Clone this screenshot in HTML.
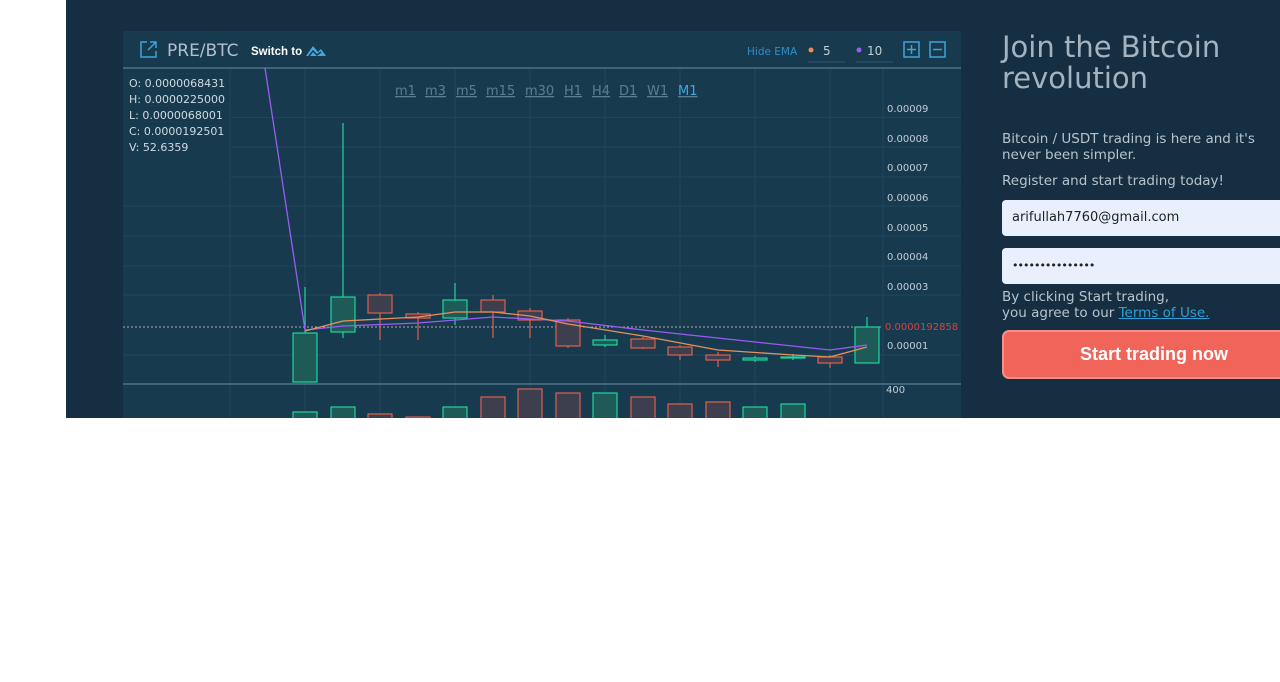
<!DOCTYPE html>
<html><head><meta charset="utf-8"><style>
body{margin:0;width:1280px;height:682px;background:#fff;overflow:hidden;font-family:"DejaVu Sans","Liberation Sans",sans-serif;}
#bg{position:absolute;left:66px;top:0;width:1214px;height:418px;background:#152e42;overflow:hidden}
#panel{position:absolute;left:57px;top:31px;width:838px;height:387px;background:#173a4f}
.r{position:absolute;color:#b7c4cd}
</style></head><body>
<div id="bg">
<div id="panel"></div>
<svg style="position:absolute;left:0;top:0" width="900" height="418">
<g transform="translate(-66,0)">
<line x1="123" y1="68" x2="961" y2="68" stroke="#4f7287" stroke-width="1.5"/>
<g stroke="#21465c" stroke-width="1">
<line x1="230" y1="69" x2="230" y2="418"/><line x1="305" y1="69" x2="305" y2="418"/><line x1="380" y1="69" x2="380" y2="418"/><line x1="455" y1="69" x2="455" y2="418"/><line x1="530" y1="69" x2="530" y2="418"/><line x1="605" y1="69" x2="605" y2="418"/><line x1="680" y1="69" x2="680" y2="418"/><line x1="755" y1="69" x2="755" y2="418"/><line x1="830" y1="69" x2="830" y2="418"/><line x1="883" y1="69" x2="883" y2="418"/>
<line x1="230" y1="117.5" x2="961" y2="117.5"/><line x1="230" y1="147" x2="961" y2="147"/><line x1="230" y1="177" x2="961" y2="177"/><line x1="123" y1="206" x2="961" y2="206"/><line x1="123" y1="236" x2="961" y2="236"/><line x1="123" y1="266" x2="961" y2="266"/><line x1="123" y1="295" x2="961" y2="295"/><line x1="123" y1="355" x2="961" y2="355"/>
</g>
<line x1="123" y1="384" x2="961" y2="384" stroke="#4f7287" stroke-width="1.5"/>
<line x1="123" y1="327" x2="883" y2="327" stroke="#b0a8a8" stroke-dasharray="2,2"/>
<g stroke-width="1.2">
<g stroke="#1ed59b" fill="#1d5a58">
<line x1="305" y1="287" x2="305" y2="382"/><rect x="293" y="333" width="24" height="49"/>
<line x1="343" y1="123" x2="343" y2="338"/><rect x="331" y="297" width="24" height="35"/>
<line x1="455" y1="283" x2="455" y2="325"/><rect x="443" y="300" width="24" height="18"/>
<line x1="605" y1="335" x2="605" y2="347"/><rect x="593" y="340" width="24" height="5"/>
<line x1="755" y1="356" x2="755" y2="362"/><rect x="743" y="358" width="24" height="2"/>
<line x1="793" y1="354" x2="793" y2="360"/><rect x="781" y="357" width="24" height="1"/>
<line x1="867" y1="317" x2="867" y2="363"/><rect x="855" y="327" width="24" height="36"/>
<rect x="293" y="412" width="24" height="10"/><rect x="331" y="407" width="24" height="15"/><rect x="443" y="407" width="24" height="15"/><rect x="593" y="393" width="24" height="30"/><rect x="743" y="407" width="24" height="15"/><rect x="781" y="404" width="24" height="18"/>
</g>
<g stroke="#e0604e" fill="#3d3f4f">
<line x1="380" y1="293" x2="380" y2="340"/><rect x="368" y="295" width="24" height="18"/>
<line x1="418" y1="312" x2="418" y2="340"/><rect x="406" y="314" width="24" height="4"/>
<line x1="493" y1="295" x2="493" y2="338"/><rect x="481" y="300" width="24" height="12"/>
<line x1="530" y1="308" x2="530" y2="338"/><rect x="518" y="311" width="24" height="9"/>
<line x1="568" y1="318" x2="568" y2="348"/><rect x="556" y="320" width="24" height="26"/>
<line x1="643" y1="337" x2="643" y2="349"/><rect x="631" y="339" width="24" height="9"/>
<line x1="680" y1="345" x2="680" y2="360"/><rect x="668" y="347" width="24" height="8"/>
<line x1="718" y1="352" x2="718" y2="367"/><rect x="706" y="355" width="24" height="5"/>
<line x1="830" y1="355" x2="830" y2="368"/><rect x="818" y="357" width="24" height="6"/>
<rect x="368" y="414" width="24" height="8"/><rect x="406" y="417" width="24" height="5"/><rect x="481" y="397" width="24" height="25"/><rect x="518" y="389" width="24" height="33"/><rect x="556" y="393" width="24" height="29"/><rect x="631" y="397" width="24" height="25"/><rect x="668" y="404" width="24" height="18"/><rect x="706" y="402" width="24" height="20"/>
</g>
</g>
<polyline fill="none" stroke="#9b5cf0" stroke-width="1.3" points="265,68 305,330 343,326 418,323 493,317 568,321 643,330 755,342 830,350 867,345"/>
<polyline fill="none" stroke="#e8905a" stroke-width="1.3" points="305,331 343,321 418,317 455,312 493,312 530,316 568,324 643,336 718,350 793,355 830,357 867,347"/>
<g font-family="DejaVu Sans,sans-serif" font-size="10" fill="#c3ced6">
<text x="887" y="112">0.00009</text><text x="887" y="142">0.00008</text><text x="887" y="171">0.00007</text><text x="887" y="201">0.00006</text><text x="887" y="231">0.00005</text><text x="887" y="260">0.00004</text><text x="887" y="290">0.00003</text><text x="887" y="349">0.00001</text><text x="886" y="393">400</text>
<text x="885" y="330" fill="#d2453f">0.0000192858</text>
</g>
<g font-family="DejaVu Sans,sans-serif" font-size="11" fill="#d0dae0">
<text x="129" y="87">O: 0.0000068431</text><text x="129" y="103">H: 0.0000225000</text><text x="129" y="119">L:  0.0000068001</text><text x="129" y="135">C: 0.0000192501</text><text x="129" y="151">V:  52.6359</text>
</g>
<g font-family="DejaVu Sans,sans-serif" font-size="13" fill="#5d7d92" text-decoration="underline">
<text x="395" y="95">m1</text><text x="425" y="95">m3</text><text x="456" y="95">m5</text><text x="486" y="95">m15</text><text x="525" y="95">m30</text><text x="564" y="95">H1</text><text x="592" y="95">H4</text><text x="619" y="95">D1</text><text x="647" y="95">W1</text><text x="678" y="95" fill="#3fa9e0">M1</text>
</g>
<g stroke="#3fa3d8" stroke-width="1.5" fill="none">
<path d="M147 42 H141 V57 H156 V51 M150 42 H156 V48 M156 42 L148 50"/>
<rect x="904" y="42" width="15" height="15"/><path d="M911.5 45 V54 M907 49.5 H916"/>
<rect x="930" y="42" width="15" height="15"/><path d="M933 49.5 H942"/>
</g>
<path d="M306 56 L313 46 L318 52 L321 49 L326 56 Z" fill="#3fa9e0"/>
<path d="M309 56 L313 51 L317 55 L321 52" stroke="#173a4f" stroke-width="1.5" fill="none"/>
<text x="167" y="56" font-family="DejaVu Sans,sans-serif" font-size="17" fill="#b0c1cc">PRE/BTC</text>
<text x="251" y="55" font-family="Liberation Sans,sans-serif" font-size="11.5" font-weight="bold" fill="#fff">Switch to</text>
<text x="747" y="55" font-family="DejaVu Sans,sans-serif" font-size="10.5" fill="#2e8fc4">Hide EMA</text>
<circle cx="811" cy="50" r="2.5" fill="#ee8a57"/><text x="823" y="55" font-family="DejaVu Sans,sans-serif" font-size="12" fill="#c3ced6">5</text>
<line x1="808" y1="62" x2="845" y2="62" stroke="#2c5267"/>
<circle cx="859" cy="50" r="2.5" fill="#9b5cf0"/><text x="867" y="55" font-family="DejaVu Sans,sans-serif" font-size="12" fill="#c3ced6">10</text>
<line x1="856" y1="62" x2="893" y2="62" stroke="#2c5267"/>
</g>
</svg>
<div class="r" style="left:936px;top:32px;font-size:29px;line-height:31px;color:#a3b3bf">Join the Bitcoin<br>revolution</div>
<div class="r" style="left:936px;top:131px;font-size:13.5px;line-height:16px;width:270px">Bitcoin / USDT trading is here and it's never been simpler.</div>
<div class="r" style="left:936px;top:173px;font-size:13.5px">Register and start trading today!</div>
<div style="position:absolute;left:936px;top:200px;width:300px;height:36px;background:#e8f0fe;border-radius:4px;font-size:13px;line-height:36px;padding-left:10px;color:#222">arifullah7760@gmail.com</div>
<div style="position:absolute;left:936px;top:248px;width:300px;height:36px;background:#e8f0fe;border-radius:4px;font-size:11px;line-height:36px;padding-left:10px;color:#222;letter-spacing:-1px">•••••••••••••••</div>
<div class="r" style="left:936px;top:289px;font-size:13.5px;line-height:16px">By clicking Start trading,<br>you agree to our <span style="color:#2f9ed6;text-decoration:underline">Terms of Use.</span></div>
<div style="position:absolute;left:936px;top:330px;width:300px;height:45px;background:#f0645a;border:2px solid #f49088;border-radius:7px;color:#fff;font-weight:bold;font-size:18px;line-height:45px;text-align:center;padding-right:20px;box-sizing:content-box;font-family:'Liberation Sans',sans-serif">Start trading now</div>
</div>
</body></html>
